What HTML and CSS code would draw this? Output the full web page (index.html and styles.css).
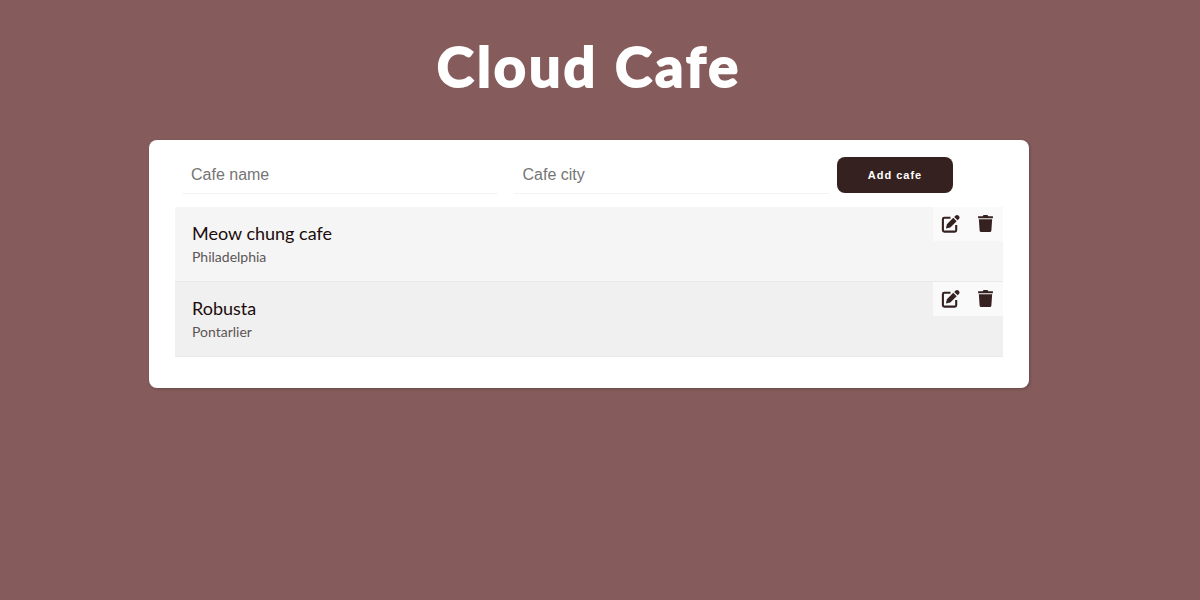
FILE: index.html
```html
<!DOCTYPE html>
<html lang="en">
<head>
<meta charset="utf-8">
<title>Cloud Cafe</title>
<link rel="stylesheet" href="styles.css">
</head>
<body>
<svg class="sprite" aria-hidden="true">
  <symbol id="edit" viewBox="0 0 20 20">
    <path d="M10 3.500H3.500Q2 3.500 2 5V16.500Q2 18 3.500 18H14.500Q16 18 16 16.500V11" fill="none" stroke="currentColor" stroke-width="2.200"/>
    <path d="M5.200 14.800L6.200 10.200L12.900 3.500L16.500 7.100L9.800 13.800ZM13.900 2.500L15.400 1Q17 -.2 18.700 1.300Q20.200 3 19 4.600L17.500 6.100Z" fill="currentColor"/>
  </symbol>
  <symbol id="trash" viewBox="0 0 20 20">
    <path d="M2.200 1.800H7L8 .6H12L13 1.800H17.800V4H2.200ZM3 5H17L16.200 16.800Q16.100 18.400 14.600 18.400H5.400Q3.900 18.400 3.800 16.800Z" fill="currentColor"/>
  </symbol>
</svg>
<h1 class="title">Cloud Cafe</h1>
<main class="card">
  <form class="add-form">
    <input class="field" type="text" placeholder="Cafe name" aria-label="Cafe name">
    <input class="field" type="text" placeholder="Cafe city" aria-label="Cafe city">
    <button class="add-button" type="button">Add cafe</button>
  </form>
  <ul class="cafes">
    <li class="cafe">
      <div class="info"><h2 class="name">Meow chung cafe</h2><p class="city">Philadelphia</p></div>
      <div class="actions">
        <button class="action" type="button" aria-label="Edit Meow chung cafe"><svg class="icon"><use href="#edit"/></svg></button>
        <button class="action" type="button" aria-label="Delete Meow chung cafe"><svg class="icon"><use href="#trash"/></svg></button>
      </div>
    </li>
    <li class="cafe">
      <div class="info"><h2 class="name">Robusta</h2><p class="city">Pontarlier</p></div>
      <div class="actions">
        <button class="action" type="button" aria-label="Edit Robusta"><svg class="icon"><use href="#edit"/></svg></button>
        <button class="action" type="button" aria-label="Delete Robusta"><svg class="icon"><use href="#trash"/></svg></button>
      </div>
    </li>
  </ul>
</main>
</body>
</html>
```
FILE: styles.css
```css
* { box-sizing: border-box; }
body {
  margin: 0;
  padding: 30px 22px 30px 0;
  background: #855b5b;
  color: #362121;
  font-family: Lato, sans-serif;
}
.sprite { display: none; }
.title {
  margin: 0 0 38px;
  color: #fff;
  font-size: 56px;
  line-height: 72px;
  font-weight: 700;
  letter-spacing: 3px;
  text-align: center;
  -webkit-text-stroke: 2px #fff;
  stroke-linejoin: round;
}
.card {
  width: 75%;
  max-width: 880px;
  margin: 0 auto;
  padding: 16px 26px 31px;
  background: #fff;
  border-radius: 8px;
  box-shadow: 1px 1px 3px rgba(0, 0, 0, .2);
}
.add-form {
  display: flex;
  align-items: center;
  padding: 0 50px 13px 7px;
}
.field {
  flex: 1;
  min-width: 0;
  height: 38px;
  margin-right: 16px;
  padding: 0 9px;
  border: 0;
  border-bottom: 1px solid #f3f3f3;
  background: transparent;
  font: 16px "Liberation Sans", sans-serif;
  outline: 0;
}
.field + .field { margin-right: 8px; }
.field::placeholder { color: #757575; }
.add-button {
  width: 116px;
  height: 36px;
  padding: 0;
  border: 0;
  border-radius: 8px;
  background: #362121;
  color: #fff;
  font: bold 11px "Liberation Sans", sans-serif;
  letter-spacing: 1px;
}
.cafes { margin: 0; padding: 0; list-style: none; }
.cafe {
  display: flex;
  justify-content: space-between;
  align-items: flex-start;
  background: #f5f5f5;
  border-bottom: 1px solid #e9e9e9;
}
.cafe:nth-child(even) { background: #f0f0f0; }
.info { padding: 14px 17px 12px; }
.name { margin: 0; font-size: 18px; line-height: 24px; font-weight: 400; color: #200c0c; }
.city { margin: 0; font-size: 14px; line-height: 24px; color: #5c5555; }
.actions { display: flex; background: #fafafa; }
.action {
  display: flex;
  padding: 7px 8px;
  border: 0;
  background: none;
  color: #362121;
}
.icon { width: 19px; height: 20px; }
```
